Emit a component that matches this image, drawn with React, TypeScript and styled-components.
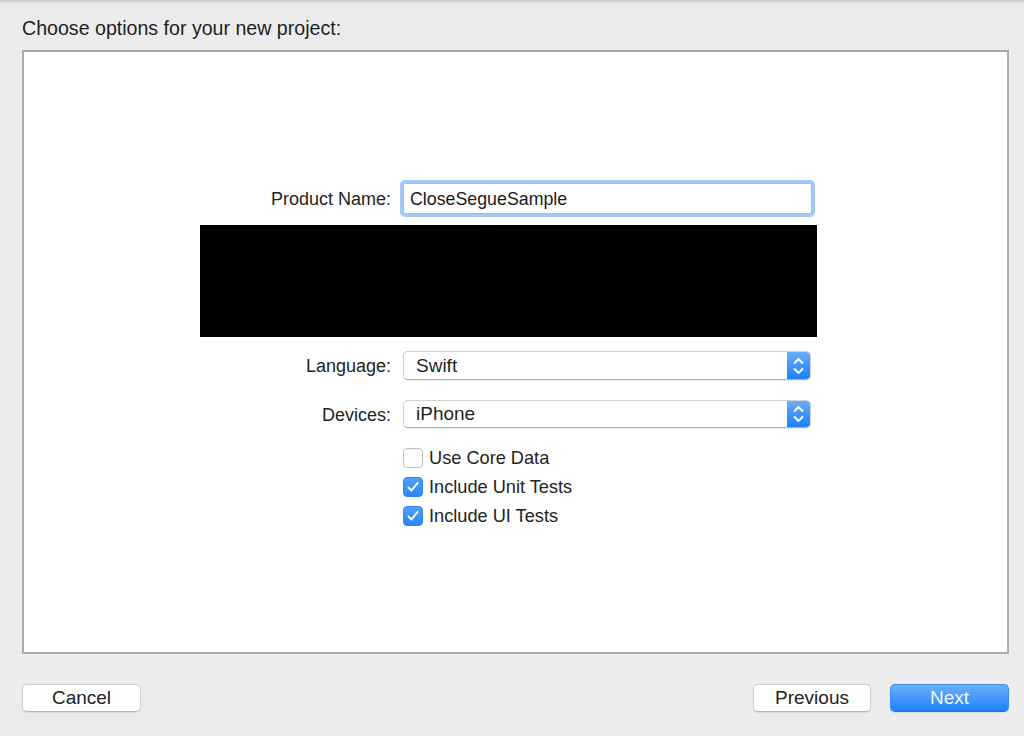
import React from "react";
import styled, { createGlobalStyle } from "styled-components";

const GlobalStyle = createGlobalStyle`
  html, body {
    margin: 0;
    padding: 0;
    background: #ececec;
  }
  body {
    font-family: "Liberation Sans", Arial, sans-serif;
    color: #222;
  }
`;

const Page = styled.div`
  width: 1024px;
  height: 736px;
  box-sizing: border-box;
  padding: 16px 15px 0 22px;
  display: flex;
  flex-direction: column;
  background: linear-gradient(to bottom, #c9c9c9 0px, #e4e4e4 3px, #ececec 6px);
`;

const Heading = styled.div`
  font-size: 19.6px;
  line-height: 24px;
  height: 24px;
  margin-bottom: 10px;
  color: #1e1e1e;
`;

const Panel = styled.div`
  height: 604px;
  box-sizing: border-box;
  background: #fff;
  border: 2px solid #acacac;
  border-top-color: #a4a4a4;
  padding-top: 131px;
  padding-left: 176px;
`;

const Form = styled.div`
  width: 617px;
  display: flex;
  flex-direction: column;
`;

const Row = styled.div<{ $gap?: number }>`
  display: grid;
  grid-template-columns: 191px 408px;
  column-gap: 12px;
  align-items: center;
  margin-top: ${(p) => p.$gap ?? 0}px;
`;

const Label = styled.div`
  font-size: 18px;
  text-align: right;
  color: #232323;
  padding-top: 2px;
`;

const TextField = styled.div`
  height: 31px;
  width: 409px;
  box-sizing: border-box;
  border: 1px solid #b9b9b9;
  background: #fff;
  box-shadow: 0 0 0 3px #a3c9f6;
  border-radius: 2px;
  display: flex;
  align-items: center;
  padding: 2px 0 0 6px;
  font-size: 17.8px;
  color: #1a1a1a;
`;

const Redacted = styled.div`
  height: 112px;
  background: #000;
  margin-top: 11px;
`;

const Popup = styled.div<{ $height: number }>`
  height: ${(p) => p.$height}px;
  box-sizing: border-box;
  display: flex;
  align-items: stretch;
  border-radius: 5px;
  background: #fff;
  border: 1px solid #d0d0d0;
  border-bottom-color: #b3b3b3;
  box-shadow: 0 0.5px 1px rgba(0, 0, 0, 0.08);
  overflow: hidden;
`;

const PopupText = styled.div`
  flex: 1;
  display: flex;
  align-items: center;
  padding-left: 12px;
  font-size: 19px;
  color: #1f1f1f;
`;

const Stepper = styled.div`
  width: 23px;
  display: flex;
  align-items: center;
  justify-content: center;
  background: linear-gradient(to bottom, #69adf9, #1c7ff7);
`;

const Checks = styled.div`
  display: flex;
  flex-direction: column;
  gap: 9px;
`;

const CheckRow = styled.div`
  display: flex;
  align-items: center;
  gap: 6px;
  height: 20px;
  font-size: 18.2px;
  color: #232323;
`;

const Box = styled.div<{ $checked?: boolean }>`
  width: 20px;
  height: 20px;
  box-sizing: border-box;
  border-radius: 4px;
  display: flex;
  align-items: center;
  justify-content: center;
  background: ${(p) => (p.$checked ? "linear-gradient(to bottom, #55a0f8, #2a86f6)" : "#fff")};
  border: 1px solid ${(p) => (p.$checked ? "#2f86ef" : "#c1c1c1")};
  box-shadow: ${(p) => (p.$checked ? "none" : "inset 0 1px 1px rgba(0,0,0,0.05)")};
`;

const Footer = styled.div`
  display: flex;
  align-items: center;
  margin-top: 30px;
`;

const Button = styled.button<{ $primary?: boolean; $width: number }>`
  width: ${(p) => p.$width}px;
  height: 28px;
  border-radius: 5px;
  font-family: "Liberation Sans", Arial, sans-serif;
  font-size: 19px;
  padding: 0;
  color: ${(p) => (p.$primary ? "#f4f8ff" : "#222")};
  background: ${(p) => (p.$primary ? "linear-gradient(to bottom, #6cb0f9, #1b81fa)" : "#fff")};
  border: 1px solid ${(p) => (p.$primary ? "#3b8ef5" : "#cfcfcf")};
  border-bottom-color: ${(p) => (p.$primary ? "#1a76ea" : "#b8b8b8")};
  box-shadow: 0 0.5px 1px rgba(0, 0, 0, 0.08);
`;

const Grow = styled.div`
  flex: 1;
`;

const ButtonGap = styled.div`
  width: 19px;
`;

const Chevrons = () => (
  <svg width="23" height="28" viewBox="0 0 23 28">
    <path d="M7.5 11 L11.5 7 L15.5 11" fill="none" stroke="#fff" strokeWidth="1.8" strokeLinecap="round" strokeLinejoin="round" />
    <path d="M7.5 17 L11.5 21 L15.5 17" fill="none" stroke="#fff" strokeWidth="1.8" strokeLinecap="round" strokeLinejoin="round" />
  </svg>
);

const Check = () => (
  <svg width="16" height="16" viewBox="0 0 16 16">
    <path d="M3.5 8.5 L6.5 11.5 L12.5 4" fill="none" stroke="#fff" strokeWidth="2" strokeLinecap="round" strokeLinejoin="round" />
  </svg>
);

type CheckProps = { label: string; checked?: boolean };

const CheckItem = ({ label, checked }: CheckProps) => (
  <CheckRow>
    <Box $checked={checked}>{checked && <Check />}</Box>
    <span>{label}</span>
  </CheckRow>
);

export default function App() {
  return (
    <>
      <GlobalStyle />
      <Page>
        <Heading>Choose options for your new project:</Heading>
        <Panel>
          <Form>
            <Row>
              <Label>Product Name:</Label>
              <TextField>CloseSegueSample</TextField>
            </Row>
            <Redacted />
            <Row $gap={14}>
              <Label>Language:</Label>
              <Popup $height={29}>
                <PopupText>Swift</PopupText>
                <Stepper>
                  <Chevrons />
                </Stepper>
              </Popup>
            </Row>
            <Row $gap={20}>
              <Label>Devices:</Label>
              <Popup $height={28}>
                <PopupText>iPhone</PopupText>
                <Stepper>
                  <Chevrons />
                </Stepper>
              </Popup>
            </Row>
            <Row $gap={20}>
              <div />
              <Checks>
                <CheckItem label="Use Core Data" />
                <CheckItem label="Include Unit Tests" checked />
                <CheckItem label="Include UI Tests" checked />
              </Checks>
            </Row>
          </Form>
        </Panel>
        <Footer>
          <Button $width={119}>Cancel</Button>
          <Grow />
          <Button $width={118}>Previous</Button>
          <ButtonGap />
          <Button $width={119} $primary>
            Next
          </Button>
        </Footer>
      </Page>
    </>
  );
}
